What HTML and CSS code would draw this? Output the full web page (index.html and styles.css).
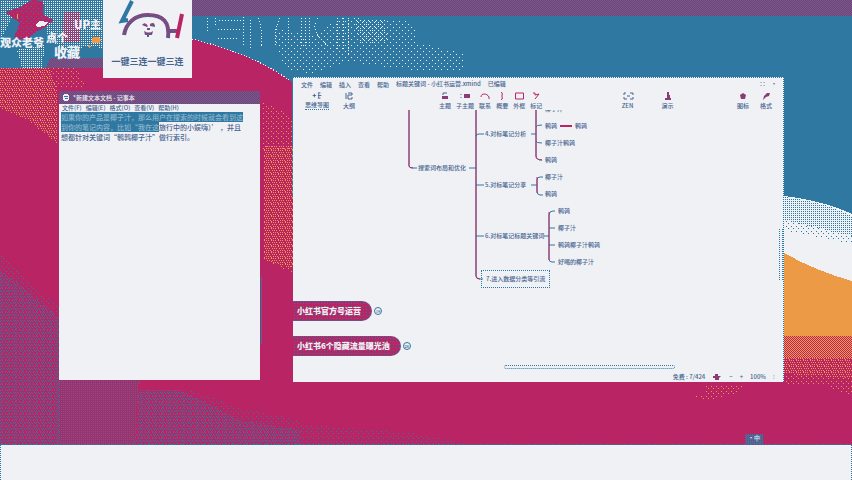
FILE: index.html
```html
<!DOCTYPE html>
<html lang="zh-CN">
<head>
<meta charset="utf-8">
<title>小红书运营</title>
<link rel="stylesheet" href="styles.css">
</head>
<body>
<main class="desktop">
  <svg class="wallpaper" viewBox="0 0 852 445" preserveAspectRatio="none" shape-rendering="crispEdges" aria-hidden="true">
    <defs>
      <pattern id="check" width="2" height="2" patternUnits="userSpaceOnUse"><path fill="#b92564" d="M1 0h1v1H1zM0 1h1v1H0z"/></pattern>
      <pattern id="blueMid" width="7" height="6" patternUnits="userSpaceOnUse"><path fill="#2f78a2" d="M0 0h1v1H0zM2 0h1v1H2zM5 0h1v1H5zM1 2h1v1H1zM3 2h1v1H3zM6 2h1v1H6zM0 3h1v1H0zM4 3h1v1H4zM2 4h1v1H2zM5 5h1v1H5zM1 5h1v1H1z"/></pattern>
      <pattern id="blueRows" width="2" height="2" patternUnits="userSpaceOnUse"><path fill="#2f78a2" d="M1 1h1v1H1z"/></pattern>
      <pattern id="blueLow" width="5" height="5" patternUnits="userSpaceOnUse"><path fill="#2f78a2" d="M1 1h1v1H1zM3 3h1v1H3z"/></pattern>
      <pattern id="whiteLow" width="6" height="6" patternUnits="userSpaceOnUse"><path fill="#eff1f5" d="M0 0h1v1H0zM3 3h1v1H3z"/></pattern>
      <pattern id="whiteMid" width="4" height="4" patternUnits="userSpaceOnUse"><path fill="#eff1f5" d="M0 0h1v1H0zM2 2h1v1H2z"/></pattern>
      <pattern id="whiteHigh" width="2" height="2" patternUnits="userSpaceOnUse"><path fill="#eff1f5" d="M1 1h1v1H1z"/></pattern>
      <pattern id="orangeMid" width="2" height="2" patternUnits="userSpaceOnUse"><path fill="#ec9a46" d="M1 1h1v1H1z"/></pattern>
      <pattern id="orangeLow" width="5" height="5" patternUnits="userSpaceOnUse"><path fill="#ec9a46" d="M1 1h1v1H1zM3 3h1v1H3z"/></pattern>
      <pattern id="orangeMix" width="7" height="6" patternUnits="userSpaceOnUse"><path fill="#ec9a46" d="M0 0h1v1H0zM2 0h1v1H2zM5 0h1v1H5zM1 2h1v1H1zM3 2h1v1H3zM6 2h1v1H6zM0 4h1v1H0zM4 4h1v1H4zM2 4h1v1H2zM5 5h1v1H5z"/></pattern>
      <pattern id="orangeHigh" width="2" height="2" patternUnits="userSpaceOnUse"><path fill="#ec9a46" d="M1 0h1v1H1zM0 1h1v1H0z"/></pattern>
    </defs>
    <path fill="#b92564" d="M0 0h852v445H0z"/>
    <path fill="#2f78a2" d="M192 0H852V216Q825 201 784 196H292V82Q256 55 192 39Z"/>
    <path fill="url(#check)" d="M192 0H852V16H192Z"/>
    <path fill="none" stroke="#eff1f5" stroke-dasharray="1 2" d="M192 39Q256 55 290 81M207 18v14M215 18v8M243 17v30M250 20v28M258 18q6 15 3 28M280 18q-7 15-4 27M288 18v22M301 18v29M305 18v30M309 18v26M318 18q-10 12 10 28M337 18v32M219 20h25M218 29h24M218 38h20M343 18v32M348 20v36"/>
    <path fill="url(#whiteLow)" d="M273 38L284 28 310 38 340 18 390 20 412 22 418 42 464 54 464 70 410 70 350 62 310 74 285 68Z"/>
    <path fill="url(#whiteMid)" d="M354 18L385 20 388 42 360 44Z"/>
    <path fill="#eff1f5" d="M784 196Q825 201 852 214V281Q816 271 784 253Z"/>
    <path fill="url(#blueRows)" d="M784 197Q825 202 852 216V236L784 220Z"/>
    <path fill="url(#blueLow)" d="M784 220L852 236V244L784 230Z"/>
    <path fill="#ec9a46" d="M784 253Q816 271 852 281V336H784Z"/>
    <path fill="url(#orangeHigh)" d="M784 336H852V358H784Z"/>
    <path fill="url(#orangeMix)" d="M784 358H852V378L784 374Z"/>
    <path fill="url(#orangeLow)" d="M784 374L852 378V395L835 391 824 384H784ZM704 384H745L740 392 710 401 692 397 705 394Z"/>
    <path fill="url(#orangeMix)" d="M0 68H50L57 91V144L28 120 0 108Z"/>
    <path fill="url(#orangeLow)" d="M50 68H78L86 88H57ZM262 100L293 118V150H262Z"/>
    <path fill="url(#orangeMix)" d="M264 145H293V268L264 260Z"/>
    <path fill="url(#orangeLow)" d="M264 259L293 266V275Z"/>
    <path fill="url(#blueMid)" d="M0 270Q28 290 59 318V445H0ZM139 390L180 390 210 404 240 420 300 430V445H134Z"/>
    <path fill="url(#blueRows)" d="M59 380H140L134 445H59Z"/>
    <path fill="url(#blueLow)" d="M0 254L59 308V318L0 270ZM180 386L240 408 300 420V430L240 420ZM300 424L420 434 470 445H300Z"/>
    <path fill="#2f78a2" d="M261 277h1v67h-1z"/>
    <path fill="#2f78a2" d="M0 0H103V68H0Z"/>
    <path fill="url(#whiteHigh)" d="M0 0H30L14 15 0 40ZM43 0H103V48L88 46 66 52 48 38ZM17 50L45 44 42 68H22Z"/>
    <path fill="#b92564" d="M5 12L20 7 32 0 43 1 43 15 54 20 45 27 35 33 25 40 14 37 20 23Z"/>
    <path fill="url(#blueLow)" d="M5 12L20 7 32 0 43 1 43 15 54 20 25 40 14 37Z"/>
    <path fill="url(#check)" d="M64 12H80V42H62ZM50 58H103V68H46Z"/>
    <path fill="#ec9a46" d="M93 37h6l2 3-1 3H92v-4zM88 45l3 1-2 3zM17 14h1v5h-1z"/>
    <path fill="#eff1f5" d="M36 24l4-3 8 1-3 4-8 1z"/>
    <path fill="none" stroke="#2f78a2" stroke-dasharray="2 1" d="M0 444.5H852"/>
  </svg>

  <p class="caption caption-up">UP主</p>
  <p class="caption caption-viewers">观众老爷</p>
  <p class="caption caption-click">点个</p>
  <p class="caption caption-save">收藏</p>

  <section class="brand">
    <svg class="brand-mark" viewBox="0 0 89 54" aria-hidden="true">
      <defs><pattern id="weave" width="3" height="2" patternUnits="userSpaceOnUse"><path fill="#2f78a2" d="M0 0h3v2H0z"/><path fill="#b92564" d="M1 0h1v1H1zM0 1h1v1H0zM2 1h1v1H2z"/></pattern></defs>
      <path fill="none" stroke="#2f78a2" stroke-width="4" d="M29 1L19 21l6-1"/>
      <path fill="none" stroke="url(#weave)" stroke-width="4" d="M21 35C23 23 32 15 45 15c15 0 22 7 20 23M65 31h12"/>
      <path fill="none" stroke="#b92564" stroke-width="4" d="M79 14L74 38"/>
      <path fill="url(#weave)" d="M39 25q3-4 6 1l-1 1zM47 24q5-3 5 3l-5-1zM44 28h3v2h-3zM41 31q5 3 9 0l-1 4h-3v2h-2v-2h-2z"/>
    </svg>
    <p class="brand-name"><span>一键三连</span><span>一键三连</span></p>
  </section>

  <section class="notepad">
    <header class="notepad-title">
      <svg class="notepad-icon" viewBox="0 0 6 7" aria-hidden="true"><path fill="#eff1f5" d="M1 0h4v1h1v5H5v1H1V6H0V1h1z"/><path stroke="#2f78a2" d="M1 2.500h4M2 4.500h3"/></svg>
      <span>*新建文本文档 - 记事本</span>
    </header>
    <nav class="notepad-menu">
      <button>文件(F)</button><button>编辑(E)</button><button>格式(O)</button><button>查看(V)</button><button>帮助(H)</button>
    </nav>
    <p class="notepad-text"><mark>如果你的产品是椰子汁，那么用户在搜索的时候就会看到这</mark><br><mark>到你的笔记内容，比如“我在这</mark>旅行中的小娱嗨）’ ，并且<br>想都针对关键词“鹌鹑椰子汁”做行索引。</p>
  </section>

  <section class="mind">
    <nav class="mind-menu">
      <button>文件</button><button>编辑</button><button>插入</button><button>查看</button><button>帮助</button>
      <span class="mind-file">标题关键词 - 小红书运营.xmind</span><span>已编辑</span>
      <span class="window-dots">∷&nbsp;&nbsp;&nbsp; ·</span>
    </nav>
    <div class="toolbar">
      <div class="tool-group views">
        <button class="tool tool-active"><svg viewBox="0 0 12 8"><path d="M1 4h4M3 2v4M7 1h3M7 4h4M7 7h3M8 1v6"/></svg>思维导图</button>
        <button class="tool"><svg viewBox="0 0 12 8"><path d="M3 1v6M5 1h4v2H5v4h4V5"/></svg>大纲</button>
      </div>
      <div class="tool-group inserts">
        <button class="tool"><svg viewBox="0 0 12 8"><path d="M4 3V1h4"/><path class="solid" d="M3 4h6v3H3z"/></svg>主题</button>
        <button class="tool"><svg viewBox="0 0 12 8"><path d="M2 2v1M2 5v1"/><path class="solid" d="M5 2h6v4H5z"/></svg>子主题</button>
        <button class="tool"><svg viewBox="0 0 12 8"><path class="pink" d="M2 5C2 1 8 1 10 5M9 6h2"/></svg>联系</button>
        <button class="tool"><svg viewBox="0 0 12 8"><path class="pink" d="M5 0q2 0 1 4 1 4-1 4"/></svg>概要</button>
        <button class="tool"><svg viewBox="0 0 12 8"><path class="pink" d="M2.500 1h8v6h-8z"/></svg>外框</button>
        <button class="tool"><svg viewBox="0 0 12 8"><path class="pink" d="M3 1h2v2l4-1-4 5"/></svg>标记</button>
      </div>
      <div class="tool-group present">
        <button class="tool"><svg viewBox="0 0 12 8"><path d="M4 1H2v2M8 1h3v2M2 5v2h3M8 7h3V5M5 4h3"/></svg>ZEN</button>
        <button class="tool"><svg viewBox="0 0 12 8"><path class="solid" d="M5 0h2v3h1v3h1v2H3V6h2z"/></svg>演示</button>
      </div>
      <div class="tool-group panels">
        <button class="tool"><svg viewBox="0 0 12 8"><path class="solid" d="M6 1l3 2-1 4H4L3 3z"/></svg>图标</button>
        <button class="tool"><svg viewBox="0 0 12 8"><path class="solid" d="M7 1h3L9 4 6 5 3 8l1-4z"/></svg>格式</button>
      </div>
    </div>

    <div class="canvas">
      <svg class="branches" width="330" height="180" viewBox="0 0 330 180" aria-hidden="true">
        <path class="line-base" d="M116 0v56q0 2 4 2h4M176 58h7M183 0v166q0 3 4 3h3M183 26q0-2 3-2h5M183 75h8M183 126h8M238 24h5M243 0v46q0 4 6 4M243 17q0-2 6-2M243 31q0 2 6 2M238 75h6M250 67h-3q-3 0-3 3v11q0 4 3 4h3M251 126h5M262 101h-2q-4 0-4 4v44q0 3 3 3h3M256 118h6M256 135h6"/>
        <path class="line-pink" d="M116 0v56q0 2 4 2M183 0v166q0 3 4 3M243 0v46q0 4 6 4M244 67v16M256 102v48"/>
      </svg>
      <span class="node n-root">搜索词布局和优化</span>
      <span class="node n-four">4.对标笔记分析</span>
      <span class="node n-five">5.对标笔记分享</span>
      <span class="node n-six">6.对标笔记标题关键词</span>
      <span class="node n-seven">7.进入数据分类等引流</span>
      <ul class="leaves leaves-four"><li>椰子汁</li><li>鹌鹑<i></i>鹌鹑</li><li>椰子汁鹌鹑</li><li>鹌鹑</li></ul>
      <ul class="leaves leaves-five"><li>椰子汁</li><li>鹌鹑</li></ul>
      <ul class="leaves leaves-six"><li>鹌鹑</li><li>椰子汁</li><li>鹌鹑椰子汁鹌鹑</li><li>好喝的椰子汁</li></ul>
      <div class="topic topic-one"><span class="pill">小红书官方号运营</span><button class="fold">19</button></div>
      <div class="topic topic-two"><span class="pill">小红书6个隐藏流量曝光池</span><button class="fold">26</button></div>
      <div class="scroll-h"></div>
      <div class="scroll-v"></div>
    </div>
    <footer class="status"><span>免费 : 7/424</span><svg viewBox="0 0 10 6"><path class="solid" d="M1 2h2V0h3v2h3L7 4v2H3V4H1z"/></svg><button>−</button><button>+</button><span>100%</span><span>⁝</span></footer>
  </section>
  <span class="ime">·中</span>
</main>
<footer class="subtitle-bar"></footer>
</body>
</html>
```
FILE: styles.css
```css
:root {
  --blue: #2f78a2;
  --pink: #b92564;
  --paper: #eff1f5;
  --ink: #47648f;
}
* { box-sizing: border-box; }
body {
  margin: 0;
  min-height: 100vh;
  display: flex;
  flex-direction: column;
  overflow: hidden;
  background: var(--paper);
  color: var(--ink);
  font: 500 6px/8px "Noto Sans CJK SC", sans-serif;
}
p, ul { margin: 0; padding: 0; list-style: none; }
button { font: inherit; color: inherit; background: none; border: 0; padding: 0; white-space: nowrap; }
.desktop { position: relative; flex: 1; }
.wallpaper { position: absolute; inset: 0; width: 100%; height: 100%; }
.subtitle-bar {
  height: 35px;
  border: 1px dotted var(--blue);
  border-width: 0 1px;
}

.caption {
  position: absolute;
  color: var(--paper);
  font-size: 11px;
  line-height: 12px;
  font-weight: 900;
  white-space: nowrap;
}
.caption-up { left: 74px; top: 18px; }
.caption-viewers { left: 0; top: 36px; }
.caption-click { left: 46px; top: 31px; }
.caption-save { left: 54px; top: 46px; font-size: 13px; }

.brand {
  position: absolute;
  left: 103px;
  top: 0;
  width: 89px;
  height: 78px;
  background: var(--paper);
}
.brand-mark { display: block; width: 100%; height: 54px; }
.brand-name {
  display: flex;
  justify-content: center;
  font-size: 9px;
  line-height: 16px;
  font-weight: 700;
}

.notepad {
  position: absolute;
  left: 59px;
  top: 91px;
  bottom: 65px;
  width: 23.6%;
  background: var(--paper);
}
.notepad-title {
  display: flex;
  align-items: center;
  gap: 4px;
  height: 13px;
  padding-left: 4px;
  color: var(--paper);
  background: repeating-conic-gradient(var(--blue) 0 25%, var(--pink) 0 50%) 0 0 / 2px 2px;
}
.notepad-icon { width: 6px; height: 7px; }
.notepad-menu { display: flex; gap: 4px; height: 8px; padding-left: 3px; }
.notepad-text {
  padding-left: 2px;
  font-size: 7px;
  line-height: 10px;
  white-space: nowrap;
}
.notepad-text mark { display: inline-block; background: var(--blue); color: #8db5cb; }

.mind {
  position: absolute;
  left: 293px;
  right: 68px;
  top: 77px;
  bottom: 63px;
  display: flex;
  flex-direction: column;
  background: var(--paper);
  border-top: 1px dotted var(--blue);
  border-right: 1px dotted var(--blue);
}
.mind-menu { display: flex; gap: 7px; height: 12px; padding: 2px 6px 0 8px; white-space: nowrap; }
.window-dots { margin-left: auto; }
.toolbar { display: flex; height: 20px; padding: 0 11px 0 12px; }
.tool-group { display: flex; align-items: flex-start; }
.tool { display: flex; flex-direction: column; align-items: center; line-height: 8px; height: 20px; }
.tool-active { border-bottom: 1px dotted var(--blue); }
.tool svg { width: 12px; height: 8px; margin: 2px 0; }
.toolbar path { fill: none; stroke: var(--ink); }
.toolbar .pink { stroke: var(--pink); }
.toolbar .solid, .status .solid { fill: #8b3c75; stroke: none; }
.views { gap: 14px; }
.inserts { gap: 5px; margin-left: 18%; }
.present { gap: 28px; margin-left: 17%; }
.panels { gap: 11px; margin-left: auto; }

.canvas {
  position: relative;
  flex: 1;
  overflow: hidden;
}
.branches { position: absolute; left: 0; top: 0; }
.branches path { fill: none; stroke: var(--blue); stroke-width: 1; }
.branches .line-pink { stroke: var(--pink); }
.node { position: absolute; line-height: 8px; white-space: nowrap; }
.n-root { left: 125px; top: 54px; }
.n-four { left: 192px; top: 20px; }
.n-five { left: 192px; top: 71px; }
.n-six { left: 192px; top: 122px; }
.n-seven {
  left: 188px;
  top: 160px;
  padding: 4px;
  border: 1px dotted var(--blue);
}
.leaves { position: absolute; white-space: nowrap; }
.leaves li { display: flex; align-items: center; height: 17px; }
.leaves i { width: 12px; height: 2px; margin: 0 3px; background: var(--pink); }
.leaves-four { left: 252px; top: -10px; }
.leaves-five { left: 252px; top: 58px; }
.leaves-six { left: 265px; top: 92px; }
.topic { position: absolute; left: 0; display: flex; align-items: center; }
.topic-one { top: 191px; }
.topic-two { top: 226px; }
.pill {
  padding: 0 10px 0 4px;
  border: 1px dotted var(--blue);
  border-left: 0;
  border-radius: 0 10px 10px 0;
  background: radial-gradient(var(--blue) 1px, transparent 1px) 0 0 / 3px 3px, var(--pink);
  color: var(--paper);
  font-size: 8px;
  line-height: 18px;
  font-weight: 900;
}
.fold {
  width: 8px;
  height: 8px;
  margin-left: 2px;
  border: 1px solid var(--blue);
  border-radius: 50%;
  font-size: 4px;
  line-height: 6px;
}
.scroll-h {
  position: absolute;
  left: 43%;
  right: 22%;
  bottom: 2px;
  height: 4px;
  border: 1px dotted var(--blue);
  border-radius: 2px;
}
.scroll-v {
  position: absolute;
  right: 0;
  top: 119px;
  width: 4px;
  height: 51px;
  border-left: 1px dotted var(--blue);
  border-right: 1px dotted var(--blue);
}
.status {
  display: flex;
  justify-content: flex-end;
  align-items: center;
  gap: 7px;
  height: 11px;
  padding-right: 8px;
}
.status svg { width: 10px; height: 6px; }
.ime {
  position: absolute;
  right: 89px;
  bottom: 1px;
  width: 18px;
  height: 10px;
  color: var(--paper);
  text-align: center;
  background: repeating-conic-gradient(var(--blue) 0 75%, var(--pink) 0 100%) 0 0 / 2px 2px;
}
```
